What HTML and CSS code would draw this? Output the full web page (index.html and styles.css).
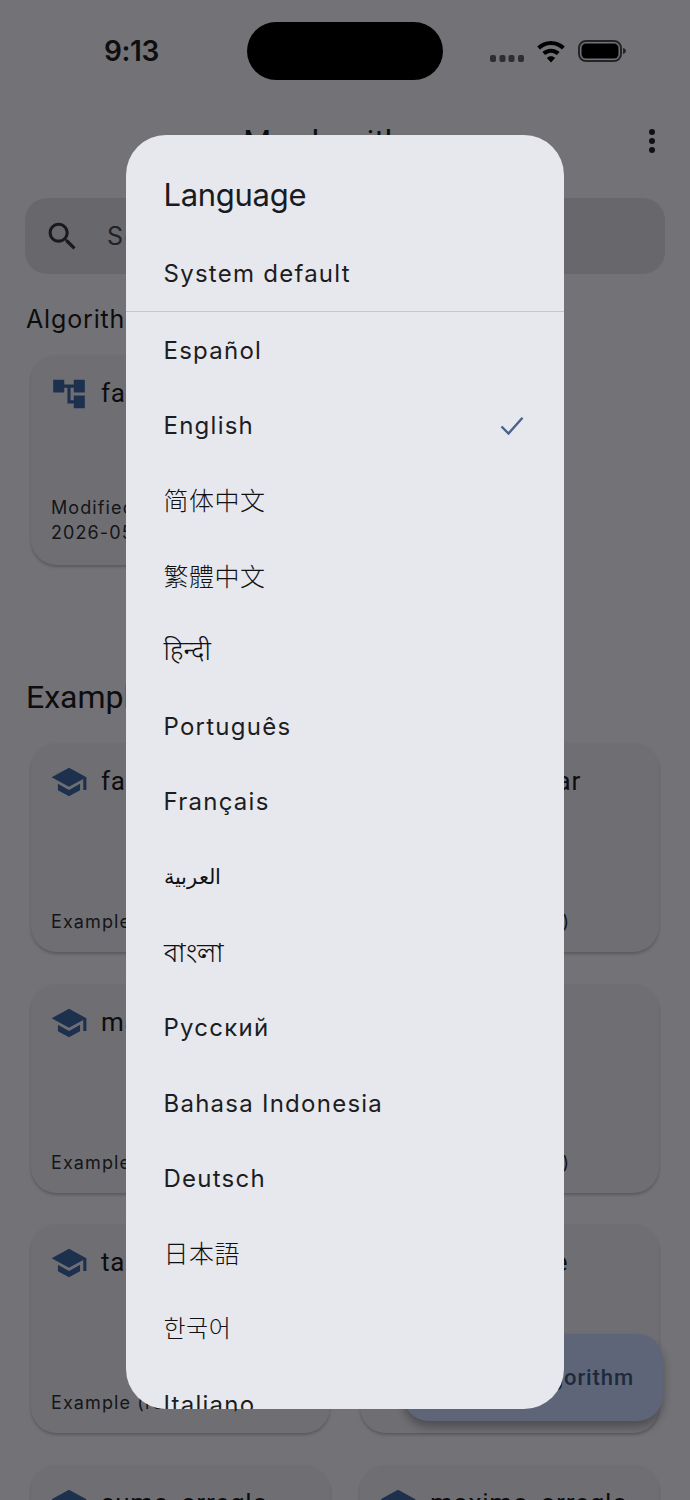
FILE: index.html
```html
<!DOCTYPE html>
<html lang="en">
<head>
<meta charset="utf-8">
<title>Language</title>
<link rel="stylesheet" href="styles.css">
</head>
<body>
<div class="screen">
  <header class="status">
    <span class="time">9:13</span>
    <div class="island"></div>
    <div class="status-icons">
      <svg class="signal" viewBox="0 0 34 7"><rect x="0" y="0" width="6" height="7" rx="2"/><rect x="9.500" y="0" width="6" height="7" rx="2"/><rect x="18.500" y="0" width="6" height="7" rx="2"/><rect x="28" y="0" width="6" height="7" rx="2"/></svg>
      <svg class="wifi" viewBox="0 0 30 24"><path d="M15 1C9.300 1 4.300 3.200.6 6.800l2.900 3.100C6.500 7 10.500 5.200 15 5.200s8.500 1.800 11.500 4.700l2.900-3.100C25.700 3.200 20.700 1 15 1zM15 9c-3.500 0-6.700 1.400-9 3.600l2.900 3.100c1.600-1.500 3.700-2.500 6.100-2.500s4.500 1 6.100 2.500l2.900-3.100C21.700 10.400 18.500 9 15 9zM15 17c-1.700 0-3.200.6-4.300 1.700L15 23.500l4.300-4.800C18.200 17.600 16.700 17 15 17z"/></svg>
      <svg class="battery" viewBox="0 0 48 22"><rect x="1" y="1" width="42" height="20" rx="7" class="batt-frame"/><rect x="3.500" y="3.500" width="37" height="15" rx="4.500"/><path class="batt-cap" d="M45 8c1.700.4 3 1.600 3 3s-1.300 2.600-3 3z"/></svg>
    </div>
  </header>

  <div class="appbar">
    <h1 class="app-title">My algorithms</h1>
    <svg class="kebab" viewBox="0 0 8 26"><circle cx="4" cy="4" r="3"/><circle cx="4" cy="13" r="3"/><circle cx="4" cy="22" r="3"/></svg>
  </div>

  <div class="search">
    <svg class="search-icon" viewBox="0 0 24 24"><path d="M15.500 14h-.79l-.28-.27C15.410 12.590 16 11.110 16 9.500 16 5.910 13.090 3 9.500 3S3 5.910 3 9.500 5.910 16 9.500 16c1.610 0 3.090-.59 4.230-1.570l.27.28v.79l5 4.990L20.490 19l-4.990-5zm-6 0C7.010 14 5 11.990 5 9.500S7.010 5 9.500 5 14 7.010 14 9.500 11.990 14 9.500 14z"/></svg>
    <span class="search-text">Search algorithms</span>
  </div>

  <h2 class="label">Algorithms</h2>
  <div class="grid first-grid">
    <article class="card">
      <div class="card-head">
        <svg class="card-icon" viewBox="0 0 24 24"><path d="M22 11V3h-7v3H9V3H2v8h7V8h2v10h4v3h7v-8h-7v3h-2V8h2v3z"/></svg>
        <span class="card-title">factorial</span>
      </div>
      <p class="card-meta">Modified:<br>2026-05-12</p>
    </article>
  </div>

  <h2 class="heading">Examples</h2>
  <div class="grid examples">
    <article class="card">
      <div class="card-head"><svg class="card-icon" viewBox="0 0 24 24"><path d="M5 13.180v4L12 21l7-3.820v-4L12 17l-7-3.820zM12 3L1 9l11 6 9-4.910V17h2V9L12 3z"/></svg><span class="card-title">factorial</span></div>
      <p class="card-meta">Example (recursive)</p>
    </article>
    <article class="card">
      <div class="card-head"><svg class="card-icon" viewBox="0 0 24 24"><path d="M5 13.180v4L12 21l7-3.820v-4L12 17l-7-3.820zM12 3L1 9l11 6 9-4.910V17h2V9L12 3z"/></svg><span class="card-title">fibonacci_ar</span></div>
      <p class="card-meta">Example (recursive)</p>
    </article>
    <article class="card">
      <div class="card-head"><svg class="card-icon" viewBox="0 0 24 24"><path d="M5 13.180v4L12 21l7-3.820v-4L12 17l-7-3.820zM12 3L1 9l11 6 9-4.910V17h2V9L12 3z"/></svg><span class="card-title">mayor_menor</span></div>
      <p class="card-meta">Example (recursive)</p>
    </article>
    <article class="card">
      <div class="card-head"><svg class="card-icon" viewBox="0 0 24 24"><path d="M5 13.180v4L12 21l7-3.820v-4L12 17l-7-3.820zM12 3L1 9l11 6 9-4.910V17h2V9L12 3z"/></svg><span class="card-title">fibonacci</span></div>
      <p class="card-meta">Example (recursive)</p>
    </article>
    <article class="card">
      <div class="card-head"><svg class="card-icon" viewBox="0 0 24 24"><path d="M5 13.180v4L12 21l7-3.820v-4L12 17l-7-3.820zM12 3L1 9l11 6 9-4.910V17h2V9L12 3z"/></svg><span class="card-title">tabla_multiplicar</span></div>
      <p class="card-meta">Example (recursive)</p>
    </article>
    <article class="card">
      <div class="card-head"><svg class="card-icon" viewBox="0 0 24 24"><path d="M5 13.180v4L12 21l7-3.820v-4L12 17l-7-3.820zM12 3L1 9l11 6 9-4.910V17h2V9L12 3z"/></svg><span class="card-title">palindrome</span></div>
    </article>
    <article class="card">
      <div class="card-head"><svg class="card-icon" viewBox="0 0 24 24"><path d="M5 13.180v4L12 21l7-3.820v-4L12 17l-7-3.820zM12 3L1 9l11 6 9-4.910V17h2V9L12 3z"/></svg><span class="card-title">suma_arreglo</span></div>
    </article>
    <article class="card">
      <div class="card-head"><svg class="card-icon" viewBox="0 0 24 24"><path d="M5 13.180v4L12 21l7-3.820v-4L12 17l-7-3.820zM12 3L1 9l11 6 9-4.910V17h2V9L12 3z"/></svg><span class="card-title">maximo_arreglo</span></div>
    </article>
  </div>

  <button class="fab">New algorithm</button>
  <div class="scrim"></div>

  <section class="dialog">
    <h2 class="dialog-title">Language</h2>
    <div class="row system">System default</div>
    <div class="divider"></div>
    <ul class="list">
      <li class="row">Español</li>
      <li class="row selected">English
        <svg class="check" viewBox="0 0 24 20"><path d="M1.500 10.500l7 7L22.500 1.800"/></svg>
      </li>
      <li class="row cjk" lang="zh-Hans">简体中文</li>
      <li class="row cjk" lang="zh-Hant">繁體中文</li>
      <li class="row script" lang="hi">हिन्दी</li>
      <li class="row">Português</li>
      <li class="row">Français</li>
      <li class="row script" lang="ar">العربية</li>
      <li class="row script" lang="bn">বাংলা</li>
      <li class="row">Русский</li>
      <li class="row">Bahasa Indonesia</li>
      <li class="row">Deutsch</li>
      <li class="row cjk" lang="ja">日本語</li>
      <li class="row cjk" lang="ko">한국어</li>
      <li class="row">Italiano</li>
    </ul>
  </section>
</div>
</body>
</html>
```
FILE: styles.css
```css
* { box-sizing: border-box; }
html, body { margin: 0; padding: 0; }
body { font-family: Inter, Roboto, "Noto Sans", "Noto Sans CJK SC", sans-serif; background: #e6e5ee; }
.screen { position: relative; width: 690px; height: 1500px; overflow: hidden; background: #e6e5ee; color: #1a1b20; }

.status { height: 102px; display: flex; align-items: flex-start; padding-top: 22px; }
.time { width: 247px; padding: 12px 0 0 104px; font-size: 28px; line-height: 34px; font-weight: 600; color: #1c1c1e; font-family: Inter, Roboto, sans-serif; letter-spacing: -.4px; }
.island { width: 196px; height: 58px; border-radius: 29px; background: #000; }
.status-icons { display: flex; align-items: flex-start; padding: 18px 0 0 47px; }
.signal { width: 34px; height: 7px; fill: #5c5c60; margin-top: 15px; }
.wifi { width: 30px; height: 23px; margin-left: 12px; fill: #000; }
.battery { width: 48px; height: 22px; margin-left: 12px; fill: #000; }
.batt-frame { fill: none; stroke: #48484c; stroke-width: 2; }
.batt-cap { fill: #4a4a4e; }

.appbar { height: 80px; display: flex; align-items: center; justify-content: center; position: relative; }
.app-title { margin: -2px 0 0; font-family: Roboto, sans-serif; font-size: 32px; font-weight: 400; }
.kebab { position: absolute; right: 34px; top: 26px; width: 8px; height: 26px; fill: #1f2024; }

.search { margin: 16px 25px 0; height: 76px; background: #d0cfd8; border-radius: 22px; display: flex; align-items: center; padding-left: 19px; gap: 26px; color: #44454d; }
.search-icon { width: 37px; height: 37px; fill: #33343a; }
.search-text { font-size: 25px; letter-spacing: 1.500px; }

.label { margin: 28px 0 0 26px; font-size: 25px; line-height: 34px; font-weight: 400; letter-spacing: .85px; color: #1a1b20; }
.heading { margin: 111px 0 0 26px; font-family: Roboto, sans-serif; font-size: 32px; line-height: 42px; font-weight: 400; color: #1a1b20; }

.grid { display: grid; grid-template-columns: 299px 299px; column-gap: 30px; row-gap: 31.700px; margin-left: 31px; }
.first-grid { margin-top: 19px; }
.examples { margin-top: 25px; }
.card { height: 209px; border-radius: 26px; background: #dfdee7; box-shadow: 0 2px 3px rgba(0,0,0,.22); padding: 20px 20px 14px; display: flex; flex-direction: column; justify-content: space-between; }
.first-grid .card { height: 210px; }
.card-head { display: flex; align-items: center; gap: 12px; }
.card-icon { width: 38px; height: 38px; flex: none; fill: #3a629c; margin-left: -1px; }
.card-title { font-family: Roboto, sans-serif; font-size: 26px; line-height: 34px; letter-spacing: .8px; white-space: nowrap; color: #1a1b20; font-weight: 400; margin: -2px 0 0 1px; }
.card-meta { margin: 0; font-size: 18px; line-height: 25px; letter-spacing: 1.100px; color: #2c2d33; padding-bottom: 6px; white-space: nowrap; }
.examples .card-meta { padding-bottom: 4px; }

.fab { position: absolute; left: 403px; top: 1334px; width: 260px; height: 87px; border: 0; border-radius: 26px; background: #bccbf0; color: #3f5378; font: 500 22px Roboto, sans-serif; letter-spacing: .9px; text-align: right; padding: 0 29px 0 0; box-shadow: 0 6px 10px rgba(0,0,0,.3); }

.scrim { position: absolute; inset: 0; background: rgba(0,0,0,.5); }

.dialog { position: absolute; left: 126px; top: 135px; width: 438px; height: 1274px; border-radius: 40px; background: #e7e8ed; overflow: hidden; color: #1c1d22; }
.dialog-title { margin: 0; padding: 38px 37.500px 0; font-size: 31px; line-height: 44px; font-weight: 400; letter-spacing: -.3px; color: #1a1b20; }
.divider { height: 1px; background: #c6c6cf; }
.list { list-style: none; margin: 1px 0 0; padding: 0; }
.row { height: 75.300px; padding: 0 38px 0 37.500px; display: flex; align-items: center; justify-content: space-between; font-size: 24px; line-height: 30px; letter-spacing: 1.250px; white-space: nowrap; }
.row.system { height: 75px; margin-top: 19px; }
.row.cjk { font-family: "Noto Sans CJK SC", sans-serif; font-weight: 300; font-size: 25px; letter-spacing: .5px; color: #101114; padding-bottom: 4px; }
.row.script { font-family: "Noto Sans", "DejaVu Sans", sans-serif; font-weight: 300; font-size: 25.500px; letter-spacing: 0; color: #101114; padding-bottom: 3px; }
.row[lang="ja"] { font-family: "Noto Sans CJK JP", sans-serif; }
.row.cjk[lang="ko"] { font-family: "Noto Sans CJK KR", sans-serif; font-size: 24px; padding-bottom: 6px; }
.row[lang="zh-Hant"] { font-family: "Noto Sans CJK TC", sans-serif; }
.row.script[lang="hi"] { font-size: 26.500px; }
.row.script[lang="ar"] { font-size: 21px; padding-bottom: 4px; }
.check { width: 24px; height: 20px; fill: none; stroke: #48618f; stroke-width: 2.400; margin-right: 2px; }
```
